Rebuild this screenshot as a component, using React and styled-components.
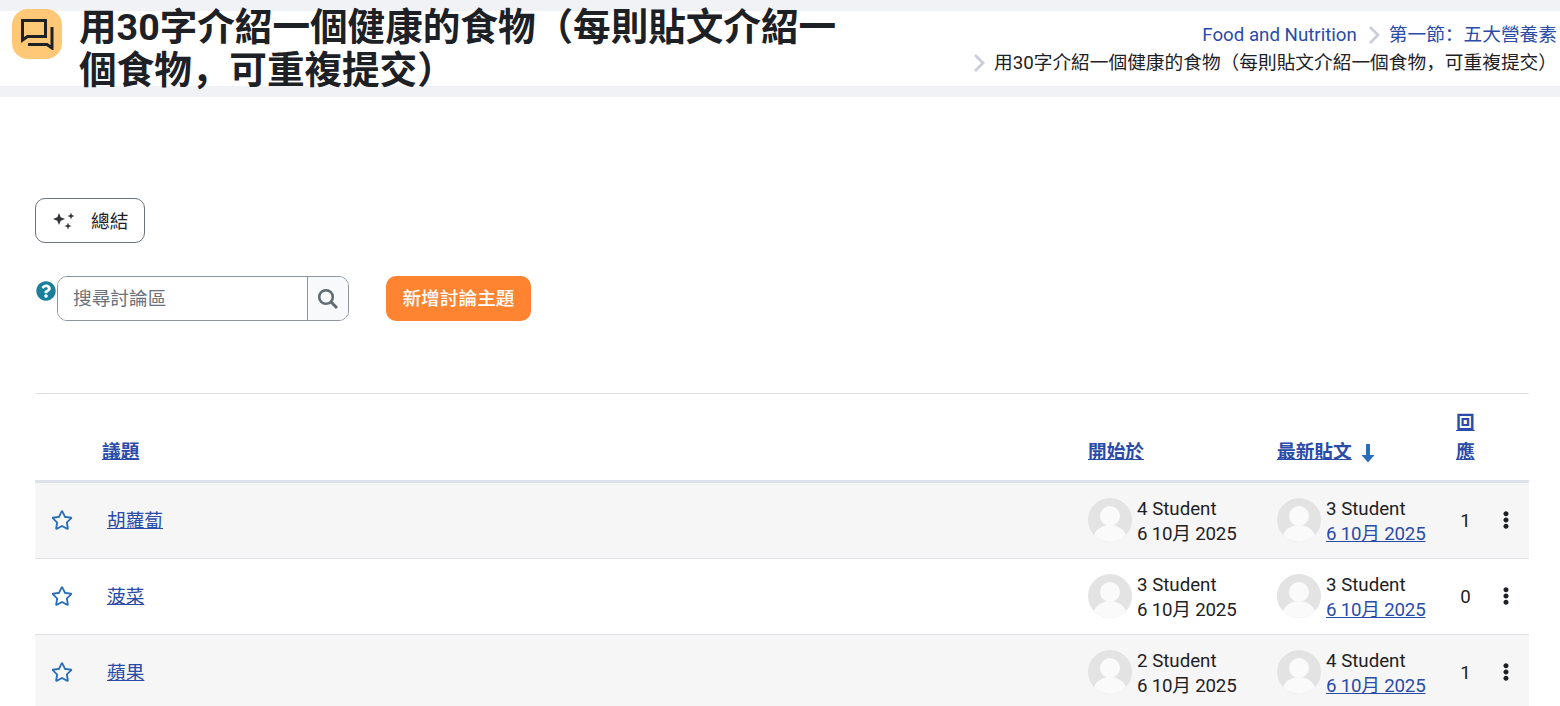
import React from "react";
import styled, { createGlobalStyle } from "styled-components";
import { FaRegStar, FaEllipsisV, FaQuestionCircle } from "react-icons/fa";

const GlobalStyle = createGlobalStyle`
  html, body {
    margin: 0;
    height: 706px;
    overflow: hidden;
    background: #fff;
  }
  body {
    font-family: Roboto, "Noto Sans CJK SC", sans-serif;
    font-size: 18.7px;
    color: #1d2125;
  }
`;

const rows = [
  { title: "胡蘿蔔", author: "4 Student", last: "3 Student", replies: 1 },
  { title: "菠菜", author: "3 Student", last: "3 Student", replies: 0 },
  { title: "蘋果", author: "2 Student", last: "4 Student", replies: 1 },
];

const crumbs = [
  { label: "Food and Nutrition", link: true },
  { label: "第一節：五大營養素", link: true },
  { label: "用30字介紹一個健康的食物（每則貼文介紹一個食物，可重複提交）" },
];

const ChatIcon = () => (
  <svg width="33" height="31" viewBox="0 0 33 31" fill="none" stroke="#1d2125" strokeWidth="3">
    <path d="M1.500 1.500h23v16H6.500l-5 3.500z" />
    <path d="M7 25.500h19l5 3.500V8" />
  </svg>
);

const Chevron = () => (
  <svg width="12" height="20" viewBox="0 0 12 20" fill="none" stroke="#c9ced8" strokeWidth="2.800">
    <path d="M2 2l8 8-8 8" />
  </svg>
);

const SparkIcon = () => (
  <svg width="24" height="22" viewBox="0 0 24 22" fill="#2f353b">
    <path d="M7 4l1.700 4.300L13 10l-4.300 1.700L7 16l-1.700-4.300L1 10l4.300-1.700z" />
    <path d="M19 3.500l.9 2.600 2.600.9-2.600.9-.9 2.600-.9-2.600-2.600-.9 2.600-.9z" />
    <path d="M16 13.500l.9 2.600 2.600.9-2.600.9-.9 2.600-.9-2.600-2.600-.9 2.600-.9z" />
  </svg>
);

const SearchIcon = () => (
  <svg width="22" height="22" viewBox="0 0 22 22" fill="none" stroke="#5f6b75" strokeWidth="2.600">
    <circle cx="9" cy="9" r="6.800" />
    <path d="M14 14l6 6" strokeWidth="3" />
  </svg>
);

const SortArrow = () => (
  <svg width="14" height="20" viewBox="0 0 14 20" fill="#2a6ebb">
    <path d="M5 1h4v11h4.500L7 19.500.5 12H5z" />
  </svg>
);

const AvatarPicture = () => (
  <svg width="44" height="44" viewBox="0 0 44 44">
    <circle cx="22" cy="22" r="22" fill="#e3e3e3" />
    <circle cx="22" cy="18" r="10" fill="#fafafa" />
    <path d="M6 37c3-7 10-10 16-10s13 3 16 10a22 22 0 0 1-32 0z" fill="#fafafa" />
  </svg>
);

const App = () => {
  return (
    <Page>
      <GlobalStyle />
      <Band>
        <HeaderInner>
          <TitleGroup>
            <IconTile>
              <ChatIcon />
            </IconTile>
            <Title>用30字介紹一個健康的食物（每則貼文介紹一個食物，可重複提交）</Title>
          </TitleGroup>
          <Breadcrumb>
            {crumbs.map((crumb, i) => (
              <Crumb key={crumb.label}>
                {i > 0 && <Chevron />}
                {crumb.link ? <CrumbLink href="#">{crumb.label}</CrumbLink> : <span>{crumb.label}</span>}
              </Crumb>
            ))}
          </Breadcrumb>
        </HeaderInner>
      </Band>

      <Content>
        <SummaryButton type="button">
          <SparkIcon />
          總結
        </SummaryButton>

        <SearchRow>
          <HelpIcon>
            <FaQuestionCircle size={20} />
          </HelpIcon>
          <SearchBox>
            <SearchInput placeholder="搜尋討論區" />
            <SearchButton type="button">
              <SearchIcon />
            </SearchButton>
          </SearchBox>
          <PrimaryButton type="button">新增討論主題</PrimaryButton>
        </SearchRow>

        <Table>
          <HeadRow>
            <span />
            <HeadLink href="#">議題</HeadLink>
            <HeadLink href="#">開始於</HeadLink>
            <HeadCell>
              <HeadLink href="#">最新貼文</HeadLink>
              <SortArrow />
            </HeadCell>
            <HeadLink href="#">回應</HeadLink>
          </HeadRow>
          {rows.map((row, i) => (
            <Row key={row.title} $striped={i % 2 === 0}>
              <StarCell>
                <FaRegStar size={22} />
              </StarCell>
              <TopicLink href="#">{row.title}</TopicLink>
              <Person>
                <AvatarPicture />
                <PersonText>
                  <div>{row.author}</div>
                  <DateText>6 10月 2025</DateText>
                </PersonText>
              </Person>
              <Person>
                <AvatarPicture />
                <PersonText>
                  <div>{row.last}</div>
                  <DateLink href="#">6 10月 2025</DateLink>
                </PersonText>
              </Person>
              <Replies>{row.replies}</Replies>
              <MenuCell>
                <FaEllipsisV size={18} />
              </MenuCell>
            </Row>
          ))}
        </Table>
      </Content>
    </Page>
  );
};

const Page = styled.div`
  height: 706px;
  overflow: hidden;
`;

const Band = styled.header`
  background: #f0f2f6;
  padding: 11px 0;
`;

const HeaderInner = styled.div`
  height: 75px;
  background: #fff;
  display: flex;
  justify-content: space-between;
`;

const TitleGroup = styled.div`
  display: flex;
  align-items: flex-start;
  gap: 16px;
  padding-left: 12px;
`;

const IconTile = styled.div`
  width: 50px;
  height: 50px;
  flex: none;
  margin: -2px 1px 0 0;
  border-radius: 16px;
  background: #ffc877;
  display: flex;
  align-items: center;
  justify-content: center;
`;

const Title = styled.h1`
  width: 770px;
  margin: -5px 0 0;
  font-size: 37.6px;
  line-height: 43px;
  font-weight: 700;
`;

const Breadcrumb = styled.ol`
  list-style: none;
  margin: 10px 3px 0 0;
  padding: 0;
  max-width: 590px;
  display: flex;
  flex-wrap: wrap;
  justify-content: flex-end;
  align-content: flex-start;
  gap: 0 11px;
  line-height: 28px;
`;

const Crumb = styled.li`
  display: flex;
  align-items: center;
  gap: 9px;
  white-space: nowrap;
`;

const CrumbLink = styled.a`
  color: #2a4ba8;
  text-decoration: none;
`;

const Content = styled.main`
  padding: 101px 31px 0 35px;
`;

const SummaryButton = styled.button`
  width: 110px;
  height: 45px;
  padding: 0 0 2px 16px;
  display: flex;
  align-items: center;
  gap: 15px;
  background: #fff;
  border: 1px solid #6a737b;
  border-radius: 10px;
  font: inherit;
  color: inherit;
`;

const SearchRow = styled.div`
  margin-top: 33px;
  display: flex;
  align-items: flex-start;
`;

const HelpIcon = styled.span`
  width: 21px;
  margin: 5px 0 0 1px;
  color: #1a7f9c;
  line-height: 0;
`;

const SearchBox = styled.div`
  width: 292px;
  height: 45px;
  box-sizing: border-box;
  display: flex;
  border: 1px solid #8f959e;
  border-radius: 10px;
  overflow: hidden;
`;

const SearchInput = styled.input`
  flex: 1;
  min-width: 0;
  border: 0;
  outline: 0;
  padding: 0 15px;
  font: inherit;
  color: inherit;

  &::placeholder {
    color: #6a737b;
    opacity: 1;
  }
`;

const SearchButton = styled.button`
  width: 41px;
  flex: none;
  padding: 0;
  display: flex;
  align-items: center;
  justify-content: center;
  background: #f8f9fa;
  border: 0;
  border-left: 1px solid #8f959e;
`;

const PrimaryButton = styled.button`
  margin-left: 37px;
  width: 145px;
  height: 45px;
  padding: 0 0 5px;
  background: #ff8432;
  border: 0;
  border-radius: 10px;
  color: #fff;
  font: inherit;
  font-weight: 500;
`;

const Table = styled.div`
  margin-top: 72px;
  border-top: 1px solid #dee2e6;
`;

const columns = "67px 986px 189px 179px 19px 54px";

const HeadRow = styled.div`
  display: grid;
  grid-template-columns: ${columns};
  align-items: end;
  height: 86px;
  border-bottom: 3px solid #dee2ea;
  line-height: 29px;

  & > * {
    margin-bottom: 13px;
  }
`;

const HeadLink = styled.a`
  color: #2a4ba8;
  font-weight: 700;
  text-decoration: underline;
`;

const HeadCell = styled.div`
  display: flex;
  align-items: center;
  gap: 9px;

  & > a {
    margin: 0;
  }
`;

const Row = styled.div`
  display: grid;
  grid-template-columns: ${columns};
  align-items: center;
  height: 73px;
  padding-bottom: 2px;
  background: ${(props) => (props.$striped ? "#f6f6f6" : "#fff")};
  border-bottom: 1px solid #dee2e6;
`;

const StarCell = styled.div`
  padding-left: 16px;
  color: #2a6ebb;
  line-height: 0;
`;

const TopicLink = styled.a`
  justify-self: start;
  margin: 0 0 3px 5px;
  color: #2a4ba8;
  text-decoration: underline;
`;

const Person = styled.div`
  display: flex;
  align-items: center;
  gap: 5px;
`;

const PersonText = styled.div`
  margin-top: 4px;
  line-height: 25px;
  white-space: nowrap;
`;

const DateText = styled.div`
  letter-spacing: -0.2px;
`;

const DateLink = styled.a`
  color: #2a4ba8;
  letter-spacing: -0.2px;
  text-decoration: underline;
`;

const Replies = styled.div`
  padding-top: 2px;
  text-align: center;
`;

const MenuCell = styled.div`
  padding-left: 22px;
  line-height: 0;
`;

export default App;
